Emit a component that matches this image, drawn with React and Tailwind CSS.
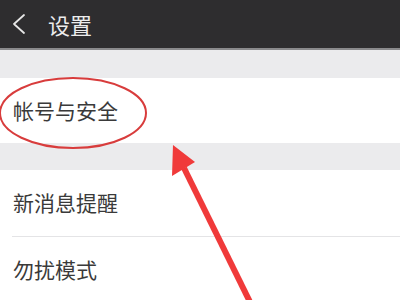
// 设置页面 — 截图复刻
const cjk = { fontFamily: '"Noto Sans CJK SC", "Noto Sans", sans-serif' };

function Fila({ texto, divisor }) {
  return (
    <div className="bg-white">
      <div className="h-[66px] flex items-center pl-[13px] text-[21px] text-[#3a3a3a]">{texto}</div>
      {divisor && <div className="ml-[12px] h-px bg-[#e4e4e6]" />}
    </div>
  );
}

export default function App() {
  return (
    <div className="relative w-[400px] h-[300px] overflow-hidden bg-[#ebebed]" style={cjk}>
      {/* Header */}
      <div className="h-[50px] bg-[#2e2d2f] flex items-center border-b-2 border-[#8a8a8c]">
        <svg className="ml-[12px] w-[14px] h-[22px]" viewBox="0 0 14 22" fill="none">
          <path d="M12 2 L2 11 L12 20" stroke="#e6e6e6" strokeWidth="1.8" strokeLinecap="round" strokeLinejoin="round" />
        </svg>
        <span className="ml-[22px] text-[22px] text-[#ececec]">设置</span>
      </div>

      <div className="h-[28px]" />
      <div className="bg-white h-[65px] flex items-center pl-[13px] text-[21px] text-[#3a3a3a]">帐号与安全</div>
      <div className="h-[27px]" />
      <Fila texto="新消息提醒" divisor />
      <Fila texto="勿扰模式" />

      {/* anotaciones rojas */}
      <svg className="absolute inset-0 pointer-events-none" width="400" height="300" viewBox="0 0 400 300">
        <ellipse cx="73" cy="113" rx="73" ry="35" fill="none" stroke="#d83c3c" strokeWidth="2" />
        <line x1="184" y1="168" x2="250" y2="302" stroke="#f03a3a" strokeWidth="6" />
        <polygon points="173,145 172,176 195,162" fill="#f03a3a" />
      </svg>
    </div>
  );
}
